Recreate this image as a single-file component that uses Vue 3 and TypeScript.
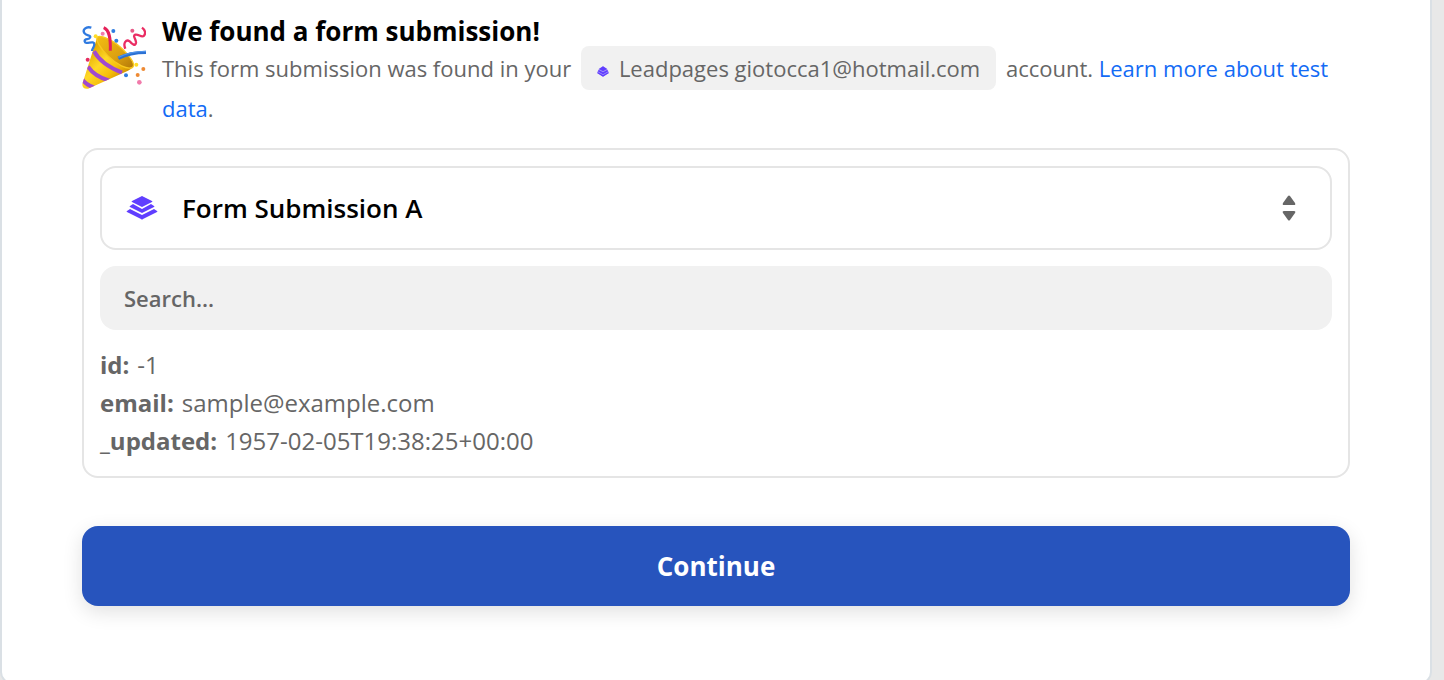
<script setup lang="ts">
import { ref } from 'vue'

interface Field {
  name: string
  value: string
}

const records: string[] = ['Form Submission A']
const selected = ref<string>(records[0])
const query = ref<string>('')
const fields: Field[] = [
  { name: 'id', value: '-1' },
  { name: 'email', value: 'sample@example.com' },
  { name: '_updated', value: '1957-02-05T19:38:25+00:00' },
]
</script>

<template>
  <div class="page">
    <main class="panel">
      <header class="intro">
        <svg class="popper" viewBox="36 48 192 192" aria-hidden="true">
          <defs>
            <linearGradient id="cone" x1="0.2" y1="0.2" x2="0.8" y2="0.8">
              <stop offset="0" stop-color="#e3a800" />
              <stop offset="0.4" stop-color="#ffd827" />
              <stop offset="0.7" stop-color="#f6bf0c" />
              <stop offset="1" stop-color="#cf8d00" />
            </linearGradient>
            <linearGradient id="mouth" x1="0" y1="0" x2="1" y2="1">
              <stop offset="0" stop-color="#f3bd12" />
              <stop offset="0.6" stop-color="#dba010" />
              <stop offset="1" stop-color="#b27808" />
            </linearGradient>
            <clipPath id="coneClip">
              <path d="M82 81 Q90 112 125 143 Q155 170 188 172 Q184 178 174 182 L54 236 Q36 238 37 221 Z" />
            </clipPath>
          </defs>
          <path d="M82 81 Q90 112 125 143 Q155 170 188 172 Q184 178 174 182 L54 236 Q36 238 37 221 Z" fill="url(#cone)" />
          <g clip-path="url(#coneClip)" fill="none" stroke="#a049cf" stroke-width="12">
            <path d="M72 124 Q94 164 156 188" />
            <path d="M54 170 Q74 200 118 212" />
            <path d="M36 206 Q46 224 72 232" />
          </g>
          <path d="M82 81 C92 75 128 88 158 118 C182 142 196 164 188 172 C172 181 139 163 114 138 C90 114 76 90 82 81 Z" fill="url(#mouth)" stroke="#f9c81f" stroke-width="4" />
          <path d="M101 53 C118 60 122 82 121 122" fill="none" stroke="#e52159" stroke-width="9" />
          <path d="M145 145 C168 133 196 127 228 127" fill="none" stroke="#2a70d3" stroke-width="10" />
          <path d="M145 142 C168 130 196 124 228 124" fill="none" stroke="#4f93ea" stroke-width="4" />
          <path d="M64 53 C47 48 37 60 43 69 C49 79 64 74 60 83 C57 91 43 84 44 94 C46 107 73 88 73 104 C72 113 66 116 66 123" fill="none" stroke="#2f7ae0" stroke-width="7" />
          <path d="M166 116 C158 98 169 87 179 94 C187 104 196 109 198 98 C199 87 186 78 196 74 C205 71 215 85 222 77 C229 69 224 59 216 53" fill="none" stroke="#ea2d63" stroke-width="7" />
          <g>
            <circle cx="98" cy="71" r="6" fill="#f17bab" />
            <circle cx="77" cy="79" r="6" fill="#ffdc27" />
            <circle cx="130" cy="63" r="6" fill="#2e7de1" />
            <circle cx="139" cy="92" r="6" fill="#2e7de1" />
            <circle cx="187" cy="62" r="6" fill="#e75a87" />
            <circle cx="53" cy="149" r="6" fill="#e52d60" />
            <circle cx="199" cy="164" r="6" fill="#ffdc27" />
            <circle cx="220" cy="177" r="6" fill="#ee8a34" />
            <circle cx="203" cy="195" r="6" fill="#ee8a34" />
            <circle cx="168" cy="196" r="6" fill="#2e7de1" />
            <circle cx="208" cy="217" r="7" fill="#f17bab" />
          </g>
        </svg>
        <div class="intro-text">
          <h1>We found a form submission!</h1>
          <p>
            This form submission was found in your
            <span class="account">
              <svg class="account-logo" viewBox="0 0 32 28" aria-hidden="true">
                <path class="logo-shade" d="M16 0 27 7 32 17 16 28 0 17 5 7Z" />
                <path d="M16 0 27 7 16 13 5 7Z" />
                <path d="M5 10 16 16 27 10 30 13 16 21 2 13Z" />
                <path d="M3 16 0 18 16 28 32 18 29 16 16 23Z" />
              </svg>Leadpages giotocca1@hotmail.com</span>
            account. <a href="#">Learn more about test data</a>.
          </p>
        </div>
      </header>

      <section class="card" aria-label="Test data">
        <div class="picker">
          <svg class="picker-logo" viewBox="0 0 32 24" aria-hidden="true">
            <path d="M16 0 26 5 Q27 6 26 6 L16 11 6 6Q5 6 6 5Z" />
            <path d="M7 8 16 13 25 8 28 10 Q29 11 28 11 L16 17 4 11 Q3 11 4 10Z" />
            <path d="M4 13 16 19 28 13 31 15 Q32 16 31 16 L17 23 Q16 24 15 23 L1 16 Q0 16 1 15Z" />
          </svg>
          <select v-model="selected" aria-label="Test record">
            <option v-for="record in records" :key="record" :value="record">{{ record }}</option>
          </select>
          <svg class="picker-arrows" viewBox="0 0 14 26" aria-hidden="true">
            <path d="M6 1 Q7 0 8 1 L13 8 Q14 10 12 10 L2 10 Q0 10 1 8Z" />
            <path d="M6 25 Q7 26 8 25 L13 18 Q14 16 12 16 L2 16 Q0 16 1 18Z" />
          </svg>
        </div>
        <input v-model="query" class="search" type="text" placeholder="Search..." aria-label="Search fields" />
        <dl class="fields">
          <div v-for="field in fields" :key="field.name" class="field">
            <dt>{{ field.name }}:</dt>
            <dd>{{ field.value }}</dd>
          </div>
        </dl>
      </section>

      <button class="continue" type="button">Continue</button>
    </main>
  </div>
</template>

<style>
body {
  margin: 0;
  background: #e8e8e8;
}
</style>

<style scoped>
.page {
  height: 100vh;
  overflow: hidden;
  padding-right: 12px;
  box-sizing: border-box;
  background: #e8e8e8;
  color: #666;
  font-family: 'Open Sans', 'Noto Sans', sans-serif;
  font-size: 24px;
}

.panel {
  box-sizing: border-box;
  min-height: calc(100vh + 4px);
  padding: 16px 80px 0;
  border: 2px solid #dae0e5;
  border-top: 0;
  border-radius: 0 0 12px 12px;
  background: #fff;
}

.intro {
  display: flex;
  gap: 16px;
  margin-bottom: 22px;
}

.popper {
  flex: none;
  width: 64px;
  height: 64px;
  margin-top: 10px;
}

.intro-text {
  flex: 1;
  min-width: 0;
}

h1 {
  margin: 0;
  color: #000;
  font-size: 26px;
  font-weight: 700;
  line-height: 30px;
}

p {
  margin: 0;
  font-size: 22px;
  line-height: 36px;
}

.account {
  display: inline-block;
  margin: 0 4px;
  padding: 4px 16px;
  border-radius: 8px;
  background: #f1f1f1;
}

.account-logo {
  width: 12px;
  height: 11px;
  margin-right: 10px;
  fill: #603eff;
}

.logo-shade {
  opacity: 0.5;
}

a {
  color: #136bf5;
  text-decoration: none;
}

.card {
  display: flex;
  flex-direction: column;
  gap: 16px;
  padding: 16px;
  border: 2px solid #e5e5e5;
  border-radius: 16px;
}

.picker {
  display: flex;
  align-items: center;
  height: 80px;
  padding: 0 34px 0 24px;
  border: 2px solid #e5e5e5;
  border-radius: 16px;
}

.picker-logo {
  flex: none;
  width: 32px;
  height: 24px;
  margin-right: 24px;
  fill: #603eff;
}

.picker select {
  flex: 1;
  min-width: 0;
  height: 80px;
  padding: 0;
  border: 0;
  outline: 0;
  appearance: none;
  background: transparent;
  color: #000;
  font-family: inherit;
  font-size: 26px;
  font-weight: 600;
}

.picker-arrows {
  flex: none;
  width: 14px;
  height: 26px;
  fill: #666;
}

.search {
  box-sizing: border-box;
  width: 100%;
  height: 64px;
  padding: 0 24px;
  border: 0;
  border-radius: 16px;
  outline: 0;
  background: #f1f1f1;
  color: #666;
  font-family: inherit;
  font-size: 22px;
  font-weight: 600;
}

.search::placeholder {
  color: #666;
  opacity: 1;
}

.fields {
  margin: 0;
}

.field {
  display: flex;
  gap: 8px;
  line-height: 38px;
}

dt {
  font-weight: 700;
}

dd {
  margin: 0;
}

.continue {
  display: block;
  width: 100%;
  height: 80px;
  margin-top: 48px;
  border: 0;
  border-radius: 16px;
  background: #2754bd;
  box-shadow: 0 6px 20px rgba(0, 0, 0, 0.12);
  color: #fff;
  font-family: inherit;
  font-size: 26px;
  font-weight: 700;
  cursor: pointer;
}
</style>
